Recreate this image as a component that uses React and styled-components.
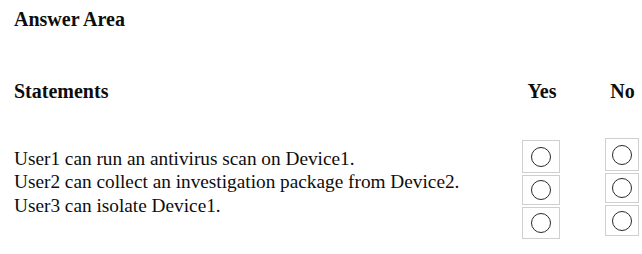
import React from "react";
import styled, { createGlobalStyle } from "styled-components";

const Global = createGlobalStyle`
  html, body { margin: 0; padding: 0; background: #ffffff; }
  body { font-family: "Liberation Serif", "Times New Roman", serif; color: #0d0d0d; }
`;

const Page = styled.div`
  width: 642px;
  height: 254px;
  box-sizing: border-box;
  padding: 7px 0 0 14px;
  overflow: hidden;
`;

const Title = styled.div`
  font-weight: 700;
  font-size: 20px;
  line-height: 24px;
  margin: 0 0 48px 0;
`;

const Table = styled.div`
  display: flex;
  align-items: flex-start;
`;

const Column = styled.div`
  width: ${(p) => p.$w}px;
  margin-left: ${(p) => p.$ml || 0}px;
  display: flex;
  flex-direction: column;
  align-items: ${(p) => (p.$center ? "center" : "flex-start")};
`;

const Header = styled.div`
  font-weight: 700;
  font-size: 20px;
  line-height: 24px;
  white-space: nowrap;
  text-align: ${(p) => (p.$center ? "center" : "left")};
  width: 100%;
  padding-left: ${(p) => p.$pl || 0}px;
  box-sizing: border-box;
`;

const Statements = styled.div`
  margin-top: 44px;
  font-size: 19.3px;
  line-height: 23.3px;
`;

const Line = styled.div`
  white-space: nowrap;
`;

const BoxStack = styled.div`
  margin-top: ${(p) => p.$mt}px;
  display: flex;
  flex-direction: column;
  gap: 2px;
  width: 100%;
`;

const Box = styled.div`
  box-sizing: border-box;
  width: 100%;
  height: ${(p) => p.$h}px;
  border: 1px solid #cfcfcf;
  display: flex;
  align-items: center;
  justify-content: center;
`;

const Radio = styled.span`
  display: block;
  box-sizing: border-box;
  width: 20px;
  height: 20px;
  border: 1.5px solid #2a2a2a;
  border-radius: 50%;
`;

const statements = [
  "User1 can run an antivirus scan on Device1.",
  "User2 can collect an investigation package from Device2.",
  "User3 can isolate Device1.",
];

export default function App() {
  return (
    <>
      <Global />
      <Page>
        <Title>Answer Area</Title>
        <Table>
          <Column $w={508}>
            <Header>Statements</Header>
            <Statements>
              {statements.map((s) => (
                <Line key={s}>{s}</Line>
              ))}
            </Statements>
          </Column>
          <Column $w={38} $center>
            <Header $center $pl={2}>Yes</Header>
            <BoxStack $mt={37}>
              {[33, 30, 32].map((h, i) => (
                <Box key={i} $h={h}>
                  <Radio />
                </Box>
              ))}
            </BoxStack>
          </Column>
          <Column $w={34} $ml={45} $center>
            <Header $center $pl={1}>No</Header>
            <BoxStack $mt={35}>
              {[33, 30, 31].map((h, i) => (
                <Box key={i} $h={h}>
                  <Radio />
                </Box>
              ))}
            </BoxStack>
          </Column>
        </Table>
      </Page>
    </>
  );
}
